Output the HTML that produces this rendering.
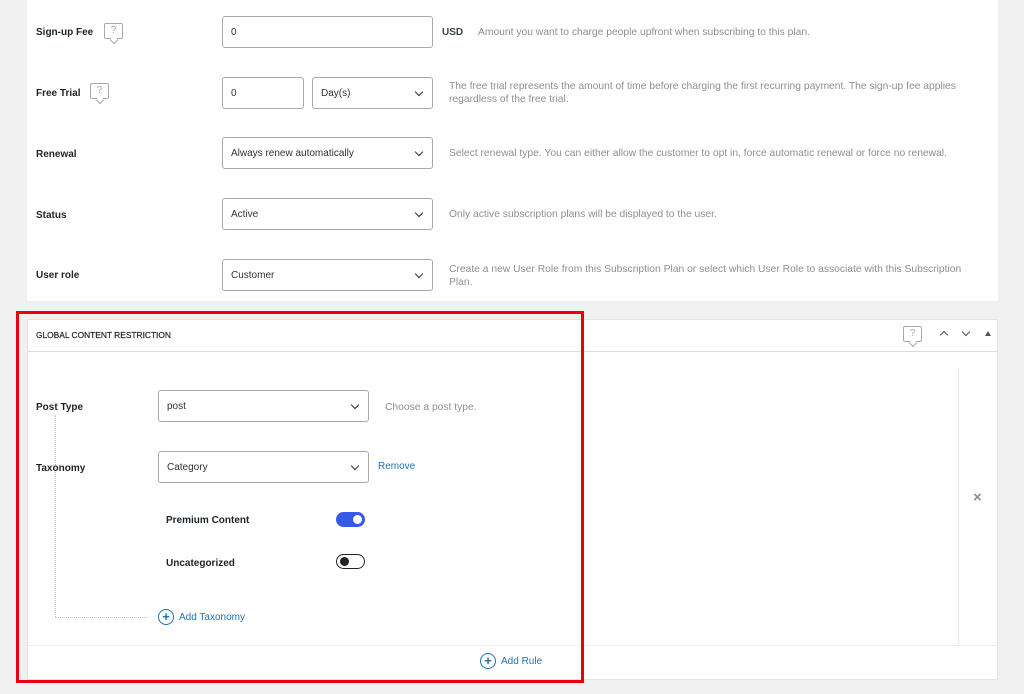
<!DOCTYPE html>
<html><head><style>
*{box-sizing:border-box;margin:0;padding:0}
body{width:1024px;height:694px;background:#f0f0f1;font-family:"Liberation Sans",sans-serif;position:relative;overflow:hidden;color:#1d2327}
.a{position:absolute}
.panel{position:absolute;background:#fff}
.lbl{position:absolute;font-size:10px;font-weight:bold;color:#1d2327}
.inp{position:absolute;background:#fff;border:1px solid #a7aaad;border-radius:3px;font-size:10px;color:#2c3338;padding-left:8px;height:32px;display:flex;align-items:center}
.sel::after{content:"";position:absolute;right:10px;top:11px;width:5px;height:5px;border-right:1.5px solid #2c3338;border-bottom:1.5px solid #2c3338;transform:rotate(45deg)}
.desc{position:absolute;font-size:10.3px;color:#8c8f94;line-height:13px}
.help{position:absolute;width:19px;height:16px;border:1.5px solid #a7aaad;border-radius:2px;font-size:10px;color:#a7aaad;text-align:center;line-height:13px}
.help::after{content:"";position:absolute;left:6px;bottom:-5px;width:5px;height:5px;background:#fff;border-right:1.5px solid #a7aaad;border-bottom:1.5px solid #a7aaad;transform:rotate(45deg)}
.tog{position:absolute;width:29px;height:15px;border-radius:8px}
.link{position:absolute;font-size:10px;color:#2271b1}
.plus{position:absolute;width:16px;height:16px;border:1.3px solid #2271b1;border-radius:50%;color:#2271b1;font-size:13px;line-height:13px;text-align:center;font-weight:bold}
</style></head><body>
<div class="panel" style="left:27px;top:0;width:971px;height:301px"></div>
<div class="lbl" style="left:36px;top:27px">Sign-up Fee</div>
<div class="help" style="left:104px;top:23px">?</div>
<div class="inp" style="left:222px;top:16px;width:211px">0</div>
<div class="lbl" style="left:442px;top:27px;color:#3c434a">USD</div>
<div class="desc" style="left:478px;top:26px">Amount you want to charge people upfront when subscribing to this plan.</div>

<div class="lbl" style="left:36px;top:88px">Free Trial</div>
<div class="help" style="left:90px;top:83px">?</div>
<div class="inp" style="left:222px;top:77px;width:82px">0</div>
<div class="inp sel" style="left:312px;top:77px;width:121px">Day(s)</div>
<div class="desc" style="left:449px;top:80px;width:530px">The free trial represents the amount of time before charging the first recurring payment. The sign-up fee applies regardless of the free trial.</div>

<div class="lbl" style="left:36px;top:149px">Renewal</div>
<div class="inp sel" style="left:222px;top:137px;width:211px">Always renew automatically</div>
<div class="desc" style="left:449px;top:147px">Select renewal type. You can either allow the customer to opt in, force automatic renewal or force no renewal.</div>

<div class="lbl" style="left:36px;top:210px">Status</div>
<div class="inp sel" style="left:222px;top:198px;width:211px">Active</div>
<div class="desc" style="left:449px;top:208px">Only active subscription plans will be displayed to the user.</div>

<div class="lbl" style="left:36px;top:270px">User role</div>
<div class="inp sel" style="left:222px;top:259px;width:211px">Customer</div>
<div class="desc" style="left:449px;top:263px;width:530px">Create a new User Role from this Subscription Plan or select which User Role to associate with this Subscription Plan.</div>

<div class="panel" style="left:27px;top:319px;width:971px;height:361px;border:1px solid #e2e4e7"></div>
<div class="a" style="left:28px;top:351px;width:969px;height:1px;background:#dcdcde"></div>
<div class="a" style="left:36px;top:330px;font-size:8.4px;color:#1d2327;-webkit-text-stroke:0.2px #1d2327">GLOBAL CONTENT RESTRICTION</div>
<div class="help" style="left:903px;top:326px">?</div>
<div class="a" style="left:941px;top:332px;width:6px;height:6px;border-left:1.6px solid #50575e;border-top:1.6px solid #50575e;transform:rotate(45deg)"></div>
<div class="a" style="left:963px;top:329px;width:6px;height:6px;border-right:1.6px solid #50575e;border-bottom:1.6px solid #50575e;transform:rotate(45deg)"></div>
<div class="a" style="left:985px;top:331px;width:0;height:0;border-left:3px solid transparent;border-right:3px solid transparent;border-bottom:5px solid #50575e"></div>
<div class="a" style="left:958px;top:368px;width:1px;height:277px;background:#e8e8ea"></div>
<div class="a" style="left:28px;top:645px;width:969px;height:1px;background:#ececee"></div>
<div class="a" style="left:973px;top:489px;font-size:15px;color:#8c8f94;font-weight:bold">×</div>

<div class="a" style="left:55px;top:415px;width:0;height:202px;border-left:1px dotted #c3c4c7"></div>
<div class="a" style="left:55px;top:617px;width:92px;height:0;border-top:1px dotted #c3c4c7"></div>
<div class="lbl" style="left:36px;top:402px">Post Type</div>
<div class="inp sel" style="left:158px;top:390px;width:211px">post</div>
<div class="desc" style="left:385px;top:401px">Choose a post type.</div>
<div class="lbl" style="left:36px;top:463px">Taxonomy</div>
<div class="inp sel" style="left:158px;top:451px;width:211px">Category</div>
<div class="link" style="left:378px;top:461px">Remove</div>
<div class="lbl" style="left:166px;top:515px">Premium Content</div>
<div class="tog" style="left:336px;top:512px;background:#3858e9"><div class="a" style="right:3px;top:3px;width:9px;height:9px;border-radius:50%;background:#fff"></div></div>
<div class="lbl" style="left:166px;top:558px">Uncategorized</div>
<div class="tog" style="left:336px;top:554px;border:1.3px solid #1d2327;background:#fff"><div class="a" style="left:3px;top:2px;width:9px;height:9px;border-radius:50%;background:#1d2327"></div></div>
<div class="plus" style="left:158px;top:609px">+</div>
<div class="link" style="left:179px;top:612px">Add Taxonomy</div>
<div class="plus" style="left:480px;top:653px">+</div>
<div class="link" style="left:501px;top:656px">Add Rule</div>

<div class="a" style="left:16px;top:311px;width:568px;height:372px;border:3px solid #e8000b"></div>
</body></html>
